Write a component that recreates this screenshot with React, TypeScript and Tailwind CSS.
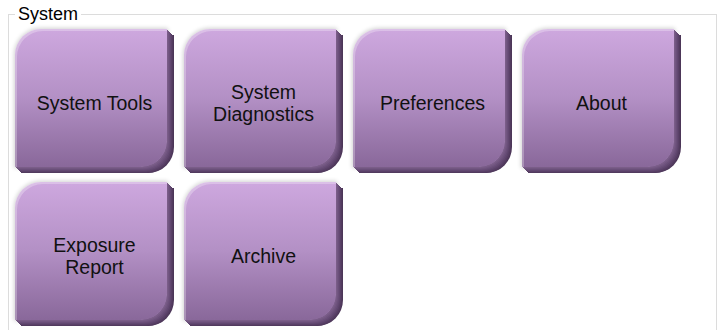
const tiles: string[][] = [
  ['System Tools'],
  ['System', 'Diagnostics'],
  ['Preferences'],
  ['About'],
  ['Exposure', 'Report'],
  ['Archive'],
];

function Tile({ lines }: { lines: string[] }) {
  return (
    <button
      type="button"
      className="flex h-[138px] w-[152px] flex-col items-center justify-center rounded-tl-[26px] rounded-br-[26px] bg-gradient-to-b from-[#cea8df] via-[#b390c5] to-[#89689a] pt-[10px] pl-[7px] text-[19.5px] leading-[22px] text-[#111111] shadow-[inset_2px_2px_0_rgba(255,255,255,0.28),1px_1px_0_#7a5d88,2px_2px_0_#725681,3px_3px_0_#6a4f79,4px_4px_0_#624871,5px_5px_0_#5a4168,6px_6px_0_#523b5f,7px_6px_0_#4c3658,0_0_4px_1px_rgba(0,0,0,0.18)]"
    >
      {lines.map((l) => (
        <span key={l}>{l}</span>
      ))}
    </button>
  );
}

export default function App() {
  return (
    <div className="h-[330px] w-[722px] overflow-hidden bg-white pt-[4px] pl-[8px] font-['Liberation_Sans',Arial,sans-serif]">
      <fieldset className="h-[400px] w-[709px] border border-[#dcdcdc] pl-[6px]">
        <legend className="px-[3px] text-[18px] leading-[20px] text-black">System</legend>
        <div className="mt-[5px] grid grid-cols-[repeat(4,152px)] gap-x-[17px] gap-y-[15px]">
          {tiles.map((t) => (
            <Tile key={t.join(' ')} lines={t} />
          ))}
        </div>
      </fieldset>
    </div>
  );
}
